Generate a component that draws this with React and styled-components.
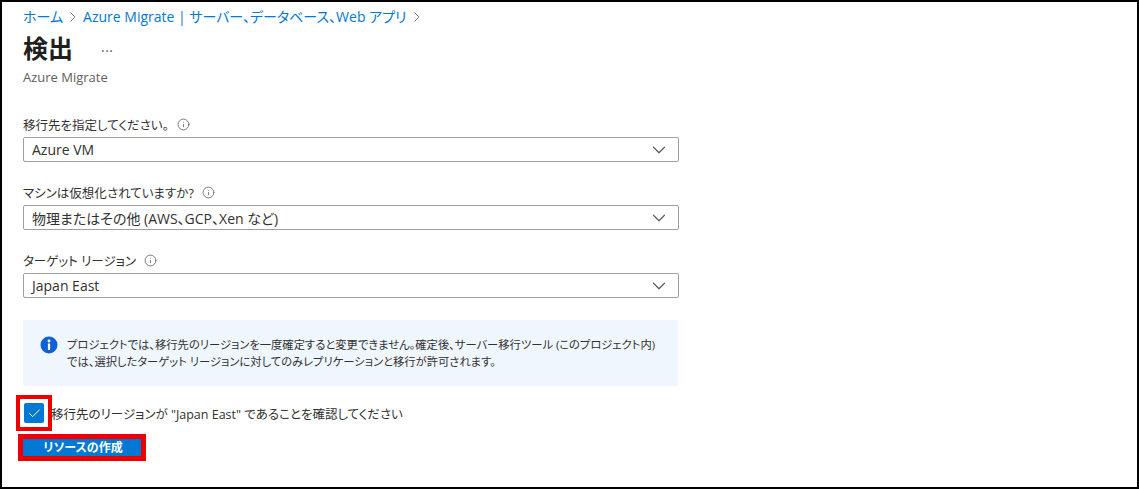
import styled, { createGlobalStyle } from 'styled-components';
import { ChevronDown, Check, Info } from 'lucide-react';

const fields = [
  { label: '移行先を指定してください。', value: 'Azure VM' },
  { label: 'マシンは仮想化されていますか?', value: '物理またはその他 (AWS、GCP、Xen など)' },
  { label: 'ターゲット リージョン', value: 'Japan East' },
];

const App = () => (
  <Frame>
    <GlobalStyle />
    <Breadcrumb>
      <Crumb>ホーム</Crumb>
      <Sep viewBox="0 0 8 12"><path d="M1.5 1.5 6 6l-4.500 4.500" /></Sep>
      <Crumb>Azure Migrate | サーバー、データベース、Web アプリ</Crumb>
      <Sep viewBox="0 0 8 12"><path d="M1.500 1.500 6 6l-4.500 4.500" /></Sep>
    </Breadcrumb>

    <TitleRow>
      <Title>検出</Title>
      <More>···</More>
    </TitleRow>
    <Subtitle>Azure Migrate</Subtitle>

    <Form>
      {fields.map(field => (
        <Field key={field.label}>
          <Label>
            {field.label}
            <HelpIcon size={13} strokeWidth={1.5} />
          </Label>
          <Select>
            <span>{field.value}</span>
            <ChevronDown size={22} strokeWidth={1.3} color="#605e5c" />
          </Select>
        </Field>
      ))}
    </Form>

    <Notice>
      <NoticeIcon viewBox="0 0 18 18">
        <circle cx="9" cy="9" r="8.500" fill="#0f62d6" />
        <rect x="7.900" y="7.500" width="2.200" height="6.500" fill="#fff" />
        <circle cx="9" cy="5" r="1.400" fill="#fff" />
      </NoticeIcon>
      <NoticeText>
        プロジェクトでは、移行先のリージョンを一度確定すると変更できません。確定後、サーバー移行ツール (このプロジェクト内)
        <br />
        では、選択したターゲット リージョンに対してのみレプリケーションと移行が許可されます。
      </NoticeText>
    </Notice>

    <ConfirmRow>
      <CheckHighlight>
        <CheckBox>
          <Check size={15} strokeWidth={1.5} color="#fff" />
        </CheckBox>
      </CheckHighlight>
      <ConfirmText>移行先のリージョンが "Japan East" であることを確認してください</ConfirmText>
    </ConfirmRow>

    <ButtonHighlight>
      <CreateButton>リソースの作成</CreateButton>
    </ButtonHighlight>
  </Frame>
);

export default App;

const fontStack = `"Open Sans", "Noto Sans CJK JP", sans-serif`;

const GlobalStyle = createGlobalStyle`
  html, body {
    margin: 0;
    padding: 0;
    background: #fff;
  }
  body {
    font-family: ${fontStack};
    font-feature-settings: "palt";
  }
`;

const Frame = styled.div`
  box-sizing: border-box;
  width: 1139px;
  height: 489px;
  padding: 6px 0 0 21px;
  background: #fff;
  border: 2px solid #000;
`;

const Breadcrumb = styled.div`
  display: flex;
  align-items: center;
  gap: 6px;
  height: 18px;
`;

const Crumb = styled.span`
  font-size: 14px;
  line-height: 18px;
  color: #0078d4;
`;

const Sep = styled.svg`
  width: 8px;
  height: 12px;
  fill: none;
  stroke: #8a8886;
  stroke-width: 1;
`;

const TitleRow = styled.div`
  display: flex;
  align-items: center;
  margin-top: 3px;
  height: 38px;
`;

const Title = styled.h1`
  margin: 0;
  font-size: 25px;
  font-weight: 700;
  line-height: 38px;
  color: #201f1e;
`;

const More = styled.span`
  margin-left: 28px;
  padding-top: 5px;
  font-size: 14px;
  letter-spacing: 0.5px;
  color: #605e5c;
`;

const Subtitle = styled.div`
  margin-top: 2px;
  font-size: 13px;
  line-height: 16px;
  color: #605e5c;
`;

const Form = styled.div`
  display: flex;
  flex-direction: column;
  gap: 20px;
  margin-top: 29px;
`;

const Field = styled.div`
  display: flex;
  flex-direction: column;
  gap: 3px;
  width: 656px;
`;

const Label = styled.div`
  display: flex;
  align-items: center;
  gap: 8px;
  height: 20px;
  font-size: 12.5px;
  color: #323130;
`;

const HelpIcon = styled(Info)`
  color: #605e5c;
`;

const Select = styled.div`
  box-sizing: border-box;
  display: flex;
  align-items: center;
  justify-content: space-between;
  height: 25px;
  padding: 0 8px 0 8px;
  font-size: 14px;
  color: #323130;
  border: 1px solid #a19f9d;
  border-radius: 2px;
`;

const Notice = styled.div`
  box-sizing: border-box;
  display: flex;
  align-items: center;
  gap: 9px;
  width: 655px;
  height: 66px;
  margin-top: 22px;
  padding: 0 17px;
  background: #eff6fe;
  border-radius: 2px;
`;

const NoticeIcon = styled.svg`
  flex: none;
  width: 18px;
  height: 18px;
  margin-bottom: 16px;
`;

const NoticeText = styled.div`
  font-size: 11.3px;
  line-height: 17px;
  white-space: nowrap;
  color: #323130;
`;

const ConfirmRow = styled.div`
  display: flex;
  align-items: center;
  margin: 9px 0 0 -7px;
`;

const CheckHighlight = styled.div`
  box-sizing: border-box;
  display: flex;
  align-items: center;
  justify-content: center;
  width: 36px;
  height: 36px;
  border: 4px solid #ee0000;
`;

const CheckBox = styled.div`
  display: flex;
  align-items: center;
  justify-content: center;
  width: 20px;
  height: 20px;
  background: #0078d4;
  border-radius: 2px;
`;

const ConfirmText = styled.span`
  margin: 1px 0 0 -1px;
  font-size: 12.5px;
  color: #323130;
`;

const ButtonHighlight = styled.div`
  box-sizing: border-box;
  width: 128px;
  height: 27px;
  margin: 3px 0 0 -5px;
  border: 5px solid #ee0000;
`;

const CreateButton = styled.button`
  display: block;
  width: 100%;
  height: 100%;
  padding: 0 0 0 2px;
  border: 0;
  background: #0078d4;
  font-family: ${fontStack};
  font-feature-settings: "palt";
  font-size: 12px;
  font-weight: 700;
  line-height: 17px;
  color: #fff;
`;
